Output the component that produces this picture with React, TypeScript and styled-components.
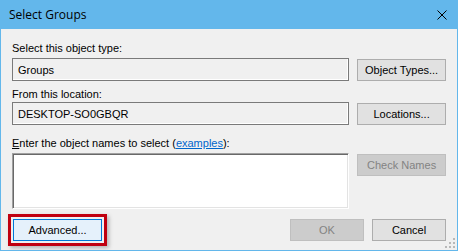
import styled, { createGlobalStyle } from 'styled-components';

const GlobalStyle = createGlobalStyle`
    html, body {
        margin: 0;
        padding: 0;
        background: #f0f0f0;
    }
`;

const Window = styled.div`
    width: 458px;
    height: 251px;
    box-sizing: border-box;
    border: 1px solid #63b7eb;
    border-top: none;
    background: #f0f0f0;
    display: flex;
    flex-direction: column;
    font-family: "Liberation Sans", Arial, sans-serif;
    font-size: 11px;
    color: #000;
    position: relative;
    overflow: hidden;
`;

const TitleBar = styled.div`
    height: 29px;
    margin: 0 -1px;
    background: #63b7eb;
    display: flex;
    align-items: center;
    justify-content: space-between;
    padding: 0 10px 0 9px;
    flex-shrink: 0;
`;

const Title = styled.span`
    font-family: "Open Sans", "Noto Sans", sans-serif;
    font-size: 12px;
    color: #000;
`;

const CloseIcon = styled.svg`
    width: 10px;
    height: 10px;
    margin-right: 1px;
`;

const Body = styled.div`
    flex: 1;
    display: flex;
    flex-direction: column;
    padding: 12px 11px 0 11px;
`;

const Label = styled.div<{ $top: number; $gap: number }>`
    height: 14px;
    line-height: 14px;
    margin-top: ${p => p.$top}px;
    margin-bottom: ${p => p.$gap}px;
    white-space: nowrap;
`;

const Row = styled.div<{ $align?: string }>`
    display: flex;
    gap: 8px;
    align-items: ${p => p.$align || 'center'};
`;

const ReadOnlyBox = styled.div`
    width: 338px;
    height: 23px;
    box-sizing: border-box;
    border: 1px solid #7a7a7a;
    box-shadow: inset -1px -1px 0 #ffffff;
    padding: 0 5px;
    display: flex;
    align-items: center;
`;

const NamesBox = styled.div`
    width: 338px;
    height: 56px;
    box-sizing: border-box;
    background: #fff;
    border-top: 1px solid #a0a0a0;
    border-left: 1px solid #a0a0a0;
    border-right: 1px solid #ffffff;
    border-bottom: 1px solid #ffffff;
    box-shadow: inset 1px 1px 0 #696969, inset -1px -1px 0 #e3e3e3;
`;

const Button = styled.button<{ $disabled?: boolean; $focused?: boolean; $width?: number }>`
    width: ${p => p.$width || 89}px;
    height: 22px;
    box-sizing: border-box;
    font-family: "Liberation Sans", Arial, sans-serif;
    font-size: 11px;
    padding: 0;
    margin: 0;
    border: 1px solid ${p => (p.$focused ? '#0078d7' : p.$disabled ? '#bfbfbf' : '#adadad')};
    background: ${p => (p.$focused ? '#e5f1fb' : p.$disabled ? '#cccccc' : '#e1e1e1')};
    color: ${p => (p.$disabled ? '#838383' : '#000')};
`;

const Spacer = styled.div`
    flex: 1;
`;

const Footer = styled.div`
    display: flex;
    align-items: center;
    gap: 8px;
    margin-top: 5px;
`;

const Highlight = styled.div`
    margin-left: -4px;
    padding: 2px;
    border: 3px solid #c00010;
    box-shadow: 2px 2px 4px rgba(0, 0, 0, 0.25);
    display: flex;
`;

const Link = styled.span`
    color: #0066cc;
    text-decoration: underline;
`;

const AccessKey = styled.span`
    text-decoration: underline;
`;

const Grip = styled.svg`
    position: absolute;
    right: 1px;
    bottom: 1px;
    width: 11px;
    height: 11px;
`;

export default function App() {
    return (
        <Window>
            <GlobalStyle />
            <TitleBar>
                <Title>Select Groups</Title>
                <CloseIcon viewBox="0 0 10 10">
                    <path d="M0.5 0.5 L9.5 9.5 M9.5 0.5 L0.5 9.5" stroke="#000" strokeWidth="1" />
                </CloseIcon>
            </TitleBar>
            <Body>
                <Label $top={0} $gap={3}>Select this object type:</Label>
                <Row>
                    <ReadOnlyBox>Groups</ReadOnlyBox>
                    <Button>Object Types...</Button>
                </Row>
                <Label $top={6} $gap={1}>From this location:</Label>
                <Row>
                    <ReadOnlyBox>DESKTOP-SO0GBQR</ReadOnlyBox>
                    <Button>Locations...</Button>
                </Row>
                <Label $top={11} $gap={3}>
                    <AccessKey>E</AccessKey>nter the object names to select (<Link>examples</Link>):
                </Label>
                <Row $align="flex-start">
                    <NamesBox />
                    <Button $disabled style={{ marginTop: 1 }}>Check Names</Button>
                </Row>
                <Footer>
                    <Highlight>
                        <Button $focused>Advanced...</Button>
                    </Highlight>
                    <Spacer />
                    <Button $disabled $width={74}>OK</Button>
                    <Button $width={74}>Cancel</Button>
                </Footer>
            </Body>
            <Grip viewBox="0 0 11 11">
                {[[8, 0], [8, 4], [4, 4], [8, 8], [4, 8], [0, 8]].map(([x, y]) => (
                    <rect key={`${x}-${y}`} x={x} y={y} width="2" height="2" fill="#b8b8b8" />
                ))}
            </Grip>
        </Window>
    );
}
